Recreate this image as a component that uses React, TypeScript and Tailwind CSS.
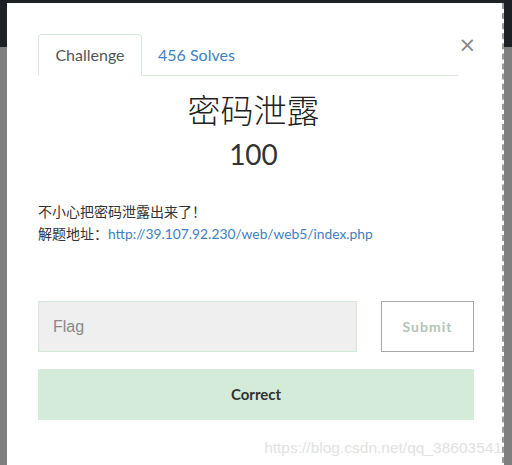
export default function App() {
  return (
    <div className="relative w-[512px] h-[465px] overflow-hidden bg-[#7f7f7f] font-['Lato','Noto_Sans_CJK_SC',sans-serif]">
      <div className="h-[47px] bg-[#1d2024]" />
      <div className="absolute left-[7px] top-[3px] w-[497px] h-[470px] bg-white border-r-2 border-dashed border-[#9a9a9a]">
        <div className="pl-[31px] pr-[44px] pt-[31px]">
          <div className="relative flex items-end border-b border-[#d6eadc]">
            <div className="-mb-px h-[42px] w-[104px] flex items-center justify-center rounded-t-[4px] border border-b-white border-[#d6eadc] bg-white text-[16px] text-[#555]">
              Challenge
            </div>
            <div className="h-[41px] pl-[16px] flex items-center text-[16px] text-[#3f80c0]">456 Solves</div>
            <div className="absolute right-[-18px] top-[1px] text-[21px] leading-none text-[#888] font-['DejaVu_Sans',sans-serif]">×</div>
          </div>
        </div>
        <div className="text-center pr-[2px]">
          <div className="mt-[13px] text-[33px] leading-[40px] text-[#222] font-['Noto_Sans_CJK_SC',sans-serif] font-light">密码泄露</div>
          <div className="mt-[5px] text-[28px] leading-[40px] text-[#333]">100</div>
        </div>
        <div className="pl-[31px] mt-[27px] text-[14px] leading-[22px] text-[#333]">
          <div>不小心把密码泄露出来了！</div>
          <div>
            解题地址：<span className="text-[#3f80c0] text-[13.8px]">http://39.107.92.230/web/web5/index.php</span>
          </div>
        </div>
        <div className="pl-[31px] mt-[56px] flex gap-[24px]">
          <div className="w-[319px] h-[51px] bg-[#efefef] border border-[#d4eadb] flex items-center pl-[14px] text-[16px] text-[#8a8a8a] font-['Liberation_Sans',sans-serif]">
            Flag
          </div>
          <div className="w-[93px] h-[51px] border border-[#aaa] flex items-center justify-center text-[14px] font-bold tracking-[1px] text-[#b3c4b8]">
            Submit
          </div>
        </div>
        <div className="ml-[31px] mt-[17px] w-[436px] h-[51px] bg-[#d4ebda] flex items-center justify-center text-[15px] font-bold text-[#333]">
          Correct
        </div>
        <div className="mt-[16px] text-right text-[15.5px] text-[#e2e2e2] font-['Liberation_Sans',sans-serif] whitespace-nowrap">
          https://blog.csdn.net/qq_38603541
        </div>
      </div>
    </div>
  );
}
